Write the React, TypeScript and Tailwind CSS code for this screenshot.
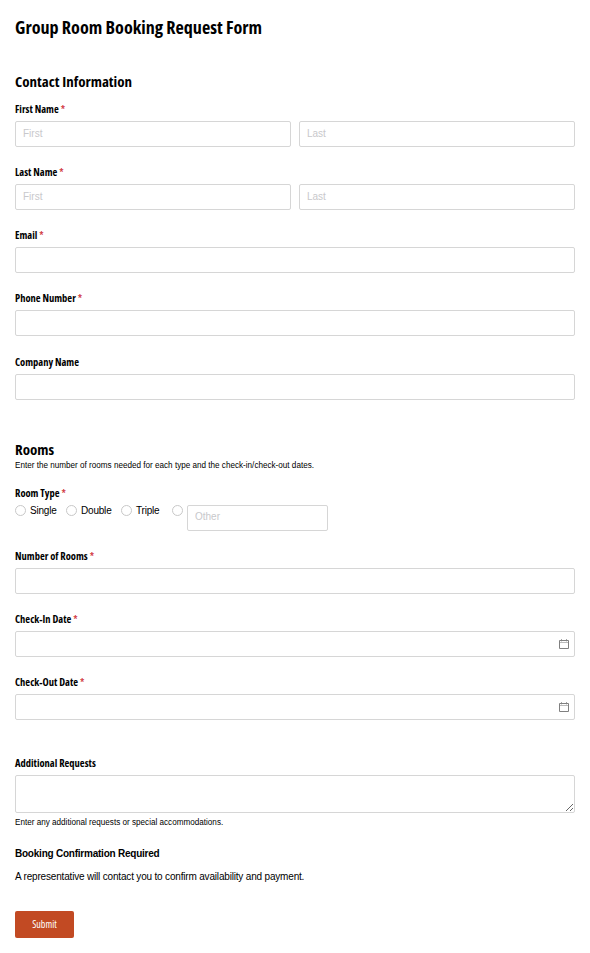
import type { ReactNode } from "react";

const inputClass =
  "block w-full h-[26px] rounded-[2px] border border-[#d6d6d6] bg-white px-[7px] pb-[2px] text-[10px] tracking-normal placeholder:text-[#c8c8cb] outline-none";

const Label = ({ text, required }: { text: string; required?: boolean }) => (
  <div className="h-[18px] whitespace-nowrap font-['Open_Sans',sans-serif] text-[10.5px] font-bold leading-[12px] font-stretch-condensed">
    {text}
    {required && <span className="font-semibold text-[#d0333b]"> *</span>}
  </div>
);

const Field = ({
  label,
  required,
  children,
}: {
  label: string;
  required?: boolean;
  children: ReactNode;
}) => (
  <div className="h-[63.1px]">
    <Label text={label} required={required} />
    {children}
  </div>
);

const NameInputs = () => (
  <div className="grid grid-cols-2 gap-2">
    <input className={inputClass} placeholder="First" />
    <input className={inputClass} placeholder="Last" />
  </div>
);

const CalendarIcon = () => (
  <svg
    className="absolute right-[6px] top-[8px] h-[10px] w-[10px]"
    viewBox="0 0 10 10"
    fill="none"
    stroke="#808080"
  >
    <path d="M.5 1.5h9v8h-9z" />
    <path d="M1 3.5h8" stroke="#bbb" />
    <path d="M2.5 .3v2M7.5 .3v2" />
  </svg>
);

const DateInput = () => (
  <div className="relative">
    <input className={inputClass} />
    <CalendarIcon />
  </div>
);

const Radio = ({ label, className }: { label: string; className: string }) => (
  <label className={`flex shrink-0 items-center gap-1 ${className}`}>
    <span className="size-[11px] shrink-0 rounded-full border border-[#c8c8c8]" />
    {label}
  </label>
);

export default function App() {
  return (
    <div className="h-[953px] w-[590px] overflow-hidden bg-white px-[15px] pt-4 font-['Liberation_Sans',Arial,sans-serif] text-black">
      <h1 className="h-[57px] whitespace-nowrap font-['Open_Sans',sans-serif] text-[18.1px] font-bold leading-[23px] font-stretch-condensed">
        Group Room Booking Request Form
      </h1>
      <h2 className="h-[30.15px] font-['Open_Sans',sans-serif] text-[15px] font-bold leading-[17px] font-stretch-condensed">
        Contact Information
      </h2>
      <Field label="First Name" required>
        <NameInputs />
      </Field>
      <Field label="Last Name" required>
        <NameInputs />
      </Field>
      <Field label="Email" required>
        <input className={inputClass} />
      </Field>
      <Field label="Phone Number" required>
        <input className={inputClass} />
      </Field>
      <Field label="Company Name">
        <input className={inputClass} />
      </Field>

      <h2 className="mt-[22px] h-[19px] font-['Open_Sans',sans-serif] text-[15px] font-bold leading-[17px] font-stretch-condensed">
        Rooms
      </h2>
      <p className="h-[27px] whitespace-nowrap pt-px text-[8.13px] leading-[10px]">
        Enter the number of rooms needed for each type and the check-in/check-out dates.
      </p>
      <Field label="Room Type" required>
        <div className="flex items-start text-[10px] leading-[12px] tracking-[-0.2px]">
          <Radio label="Single" className="w-[51px]" />
          <Radio label="Double" className="w-[55px]" />
          <Radio label="Triple" className="w-[51px]" />
          <Radio label="" className="h-3 w-[15px]" />
          <input className={`${inputClass} max-w-[141px]`} placeholder="Other" />
        </div>
      </Field>
      <Field label="Number of Rooms" required>
        <input className={inputClass} />
      </Field>
      <Field label="Check-In Date" required>
        <DateInput />
      </Field>
      <Field label="Check-Out Date" required>
        <DateInput />
      </Field>

      <div className="mt-[18px]">
        <Label text="Additional Requests" />
        <textarea className="block h-[38px] w-full resize rounded-[2px] border border-[#d6d6d6] outline-none" />
        <p className="mt-[5.5px] text-[8.13px] leading-[10px]">
          Enter any additional requests or special accommodations.
        </p>
      </div>
      <p className="mt-[19.5px] text-[10px] font-bold leading-[12px] tracking-[-0.23px]">
        Booking Confirmation Required
      </p>
      <p className="mt-[11px] text-[10px] leading-[12px] tracking-[-0.18px]">
        A representative will contact you to confirm availability and payment.
      </p>
      <button className="mt-7 block h-[27px] w-[59px] rounded-[2px] bg-[#c24a23] font-['Open_Sans',sans-serif] text-[10px] text-white font-stretch-condensed">
        Submit
      </button>
    </div>
  );
}
